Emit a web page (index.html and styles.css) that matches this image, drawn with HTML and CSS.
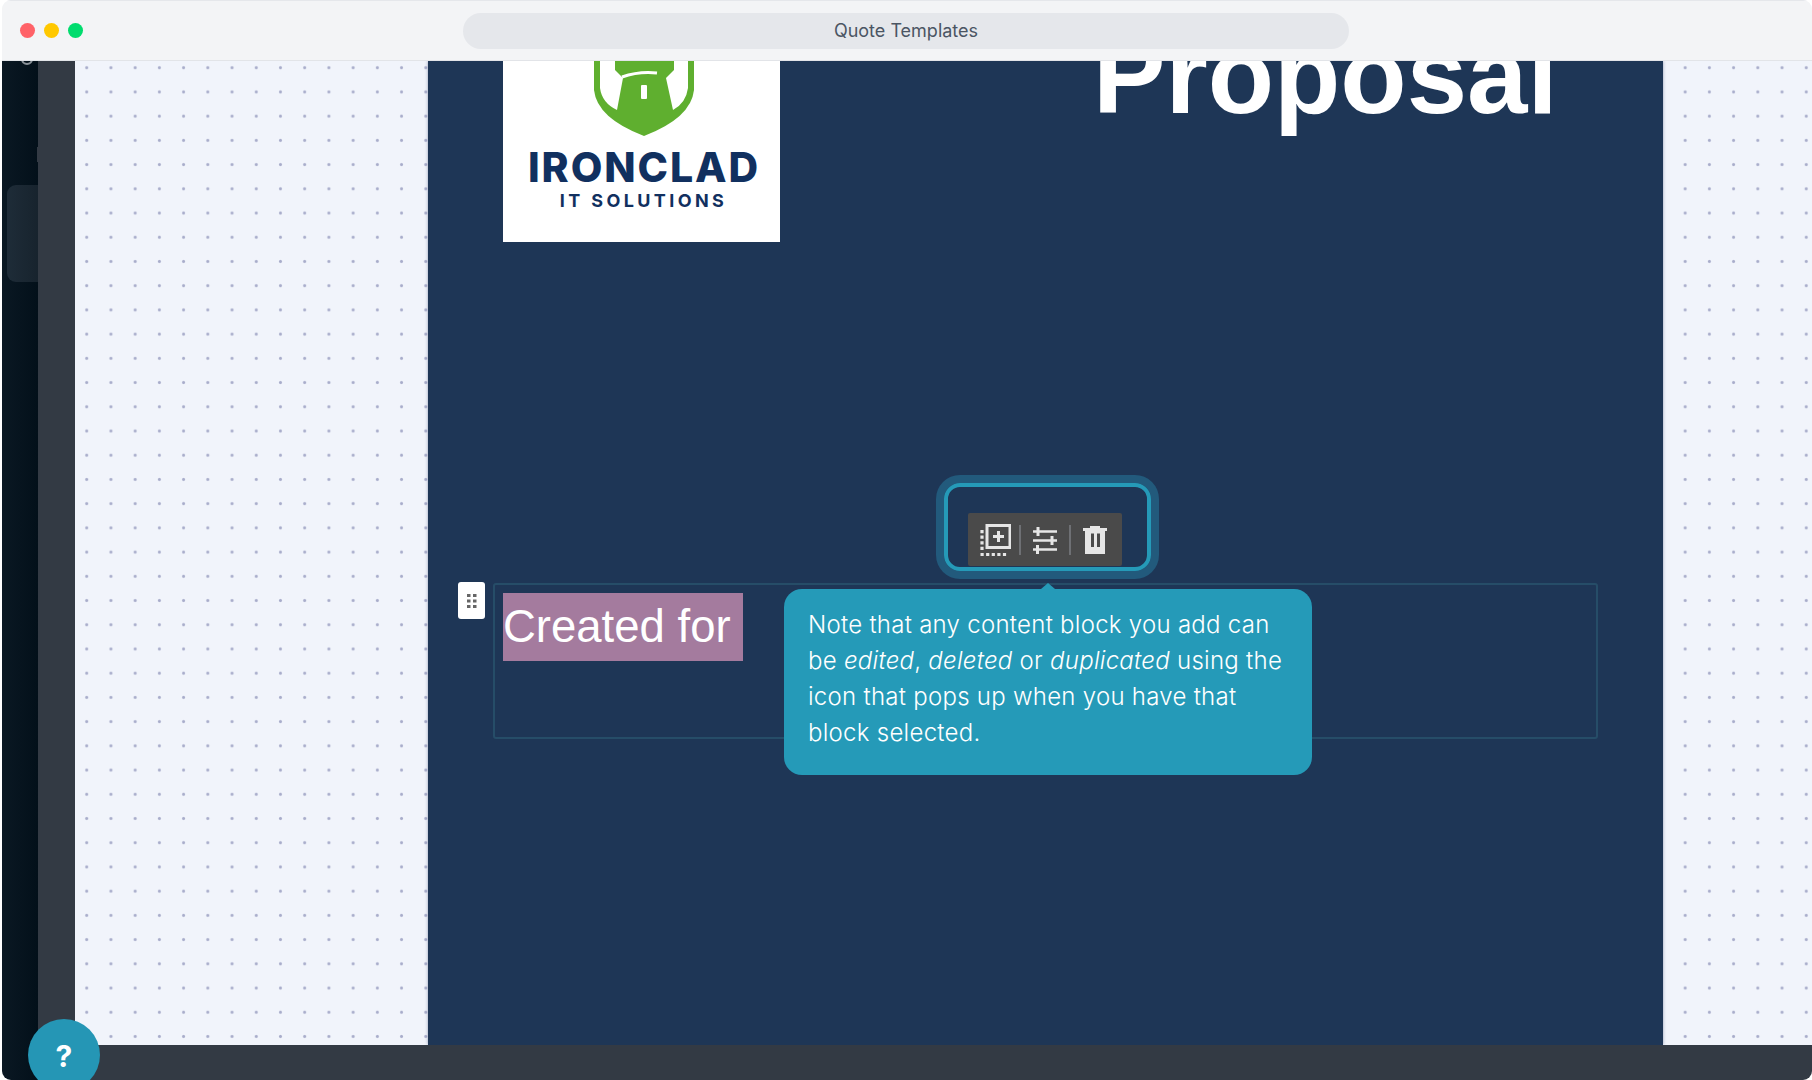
FILE: index.html
```html
<!DOCTYPE html>
<html lang="en">
<head>
  <meta charset="UTF-8">
  <title>Quote Templates</title>
  <link rel="stylesheet" href="styles.css">
</head>
<body>

  <div class="window">
    <div class="titlebar">
      <div class="lights">
        <span class="light red"></span>
        <span class="light yellow"></span>
        <span class="light green"></span>
      </div>
      <div class="address">Quote Templates</div>
    </div>

    <div class="app">
      <div class="sidebar">
        <span class="side-ring"></span>
        <span class="side-tick"></span>
        <div class="side-card"></div>
      </div>
      <div class="panel"></div>

      <div class="canvas">
        <div class="doc">
          <div class="doc-header">
            <div class="logo">
              <svg class="logo-mark" width="100" height="75" viewBox="593 61 100 75">
                <path d="M593 61V90Q596 118 643 136Q690 118 693 90V61Z" fill="#5faf2f"/>
                <path d="M599 61V88Q601 103 616 110L622 78L614 70V61ZM687 61V88Q685 103 672 110L665 78L673 70V61Z" fill="#fff"/>
                <path d="M621 77Q638 71 656 73" fill="none" stroke="#fff" stroke-width="3"/>
                <rect x="640" y="85" width="6" height="14" rx="1" fill="#fff"/>
              </svg>
              <div class="logo-name">IRONCLAD</div>
              <div class="logo-sub">IT SOLUTIONS</div>
            </div>
            <h1 class="doc-title">Proposal</h1>
          </div>

          <div class="block">
            <div class="handle">
              <svg width="10" height="14" viewBox="0 0 10 14">
                <g fill="#666">
                  <rect x="0" y="0" width="3.5" height="3"/><rect x="6" y="0" width="3.5" height="3"/>
                  <rect x="0" y="5.5" width="3.5" height="3"/><rect x="6" y="5.5" width="3.5" height="3"/>
                  <rect x="0" y="11" width="3.5" height="3"/><rect x="6" y="11" width="3.5" height="3"/>
                </g>
              </svg>
            </div>
            <span class="created">Created for</span>
          </div>

          <div class="spotlight">
            <div class="toolbar">
              <span class="tool tool-add">
                <svg width="31" height="32" viewBox="0 0 31 32">
                  <rect x="7" y="1.500" width="23" height="22" fill="none" stroke="#e6e6e6" stroke-width="3"/>
                  <path d="M18.500 7V18M13 12.500H24" stroke="#e6e6e6" stroke-width="3" fill="none"/>
                  <path d="M2 6V26" stroke="#e6e6e6" stroke-width="3.200" stroke-dasharray="3.200 2.400" fill="none"/>
                  <path d="M0.500 30.500H28" stroke="#e6e6e6" stroke-width="3.200" stroke-dasharray="3.200 2.400" fill="none"/>
                </svg>
              </span>
              <i class="sep"></i>
              <span class="tool tool-sliders">
                <svg width="24" height="28" viewBox="0 0 24 28">
                  <path d="M0 5.500H24M0 14.500H24M0 23.500H24" stroke="#e6e6e6" stroke-width="2.500" fill="none"/>
                  <path d="M5 1V10M19 10V19M4.500 19V28" stroke="#e6e6e6" stroke-width="3" fill="none"/>
                </svg>
              </span>
              <i class="sep"></i>
              <span class="tool tool-trash">
                <svg width="24" height="28" viewBox="0 0 24 28">
                  <path d="M7 0H17V2H24V5H0V2H7Z" fill="#e6e6e6"/>
                  <path d="M2 5H22V28H2ZM8 7.500V21H11V7.500ZM14 7.500V21H17V7.500Z" fill="#e6e6e6" fill-rule="evenodd"/>
                </svg>
              </span>
            </div>
          </div>

          <div class="tip">
            Note that any content block you add can be <em>edited</em>, <em>deleted</em> or <em>duplicated</em> using the icon that pops up when you have that block selected.
          </div>
        </div>
      </div>

      <div class="bottombar"></div>
    </div>

    <div class="help">?</div>
  </div>

</body>
</html>
```

FILE: styles.css
```css
html, body {
  margin: 0;
  padding: 0;
  background: #fff;
}

body {
  padding-left: 2px;
  font-family: 'Inter', sans-serif;
}

.window {
  position: relative;
  height: 1080px;
  border-radius: 9px;
  overflow: hidden;
  display: flex;
  flex-direction: column;
}

.titlebar {
  flex: none;
  height: 61px;
  box-sizing: border-box;
  border-top: 1px solid #e5e7eb;
  border-bottom: 1px solid #e2e4e8;
  background: #f3f4f6;
  display: flex;
  align-items: center;
  padding-left: 18px;
  padding-right: 463px;
}

.lights {
  display: flex;
  gap: 9px;
  width: 443px;
}

.light {
  width: 15px;
  height: 15px;
  border-radius: 50%;
}

.red { background: #ff6268; }
.yellow { background: #ffc800; }
.green { background: #00dc6e; }

.address {
  flex: 1;
  height: 36px;
  line-height: 36px;
  border-radius: 18px;
  background: #e5e7eb;
  color: #4b5563;
  font-size: 18px;
  text-align: center;
}

.app {
  flex: 1;
  min-height: 0;
  display: grid;
  grid-template-columns: 36px 37px 1fr;
  grid-template-rows: 1fr 35px;
}

.sidebar {
  grid-row: 1 / 3;
  position: relative;
  overflow: hidden;
  background: linear-gradient(90deg, #0a1823, #03101a);
}

.side-ring {
  position: absolute;
  left: 19px;
  top: -8px;
  width: 8px;
  height: 8px;
  border: 2px solid #8b9299;
  border-radius: 50%;
}

.side-tick {
  position: absolute;
  left: 35px;
  top: 86px;
  width: 2px;
  height: 15px;
  background: #333a44;
}

.side-card {
  position: absolute;
  left: 5px;
  top: 124px;
  width: 60px;
  height: 97px;
  border-radius: 9px;
  background: linear-gradient(90deg, #1e2c38, #111b24);
}

.panel {
  background: #333a44;
}

.canvas {
  padding-left: 353px;
  overflow: hidden;
  background-color: #f1f4fb;
  background-image: radial-gradient(circle, #a9adcb 1px, transparent 2px);
  background-size: 24.22px 24.22px;
  background-position: -0.4px -5.4px;
}

.doc {
  position: relative;
  width: 1235px;
  height: 100%;
  overflow: hidden;
  background: #1e3656;
  box-shadow: 0 0 3px rgba(60, 70, 120, 0.5);
}

.doc-header {
  display: flex;
  padding-left: 75px;
}

.logo {
  flex: none;
  width: 277px;
  height: 181px;
  background: #fff;
  display: flex;
  flex-direction: column;
  align-items: center;
  color: #11305f;
}

.logo-mark {
  display: block;
  flex: none;
  margin-left: 4px;
}

.logo-name {
  margin: 6px 0 0 5px;
  font-size: 41px;
  line-height: 50px;
  font-weight: 800;
  letter-spacing: 1.9px;
}

.logo-sub {
  margin: -3px 0 0 4px;
  font-size: 18px;
  line-height: 24px;
  font-weight: 700;
  letter-spacing: 3.4px;
}

.doc-title {
  margin: -48px 0 0 313px;
  font-family: 'Liberation Sans', sans-serif;
  font-size: 108.6px;
  line-height: 126px;
  font-weight: 700;
  color: #fff;
}

.block {
  position: relative;
  margin: 341px 0 0 65px;
  width: 1105px;
  height: 156px;
  box-sizing: border-box;
  padding: 8px;
  border: 2px solid #264d68;
  border-radius: 3px;
}

.handle {
  position: absolute;
  left: -37px;
  top: -3px;
  width: 27px;
  height: 37px;
  border-radius: 3px;
  background: #fff;
  display: flex;
  align-items: center;
  justify-content: center;
}

.created {
  display: inline-block;
  width: 240px;
  height: 68px;
  background: #a47b9e;
  color: #fff;
  font-family: 'Liberation Sans', sans-serif;
  font-size: 45.5px;
  line-height: 68px;
  white-space: nowrap;
}

.spotlight {
  position: absolute;
  left: 516px;
  top: 422px;
  width: 207px;
  height: 88px;
  box-sizing: border-box;
  border: 4px solid #259ab8;
  border-radius: 16px;
  box-shadow: 0 0 0 8px #225a7c;
  padding: 0 0 1px 20px;
  display: flex;
  align-items: flex-end;
}

.toolbar {
  width: 154px;
  height: 53px;
  background: #4a4a4a;
  border-radius: 2px;
  display: flex;
  align-items: center;
}

.tool {
  box-sizing: border-box;
  display: flex;
  align-items: center;
  justify-content: center;
}

.tool-add {
  width: 51px;
  padding-left: 3px;
}

.tool-sliders {
  width: 48px;
}

.tool-trash {
  width: 51px;
  padding-right: 4px;
}

.sep {
  flex: none;
  width: 2px;
  height: 30px;
  background: #6e7074;
}

.tip {
  position: absolute;
  left: 356px;
  top: 528px;
  width: 528px;
  height: 186px;
  box-sizing: border-box;
  padding: 18px 24px;
  border-radius: 18px;
  background: #259ab8;
  color: #fff;
  font-size: 24px;
  line-height: 36px;
  font-weight: 300;
  letter-spacing: 0.27px;
}

.tip::before {
  content: "";
  position: absolute;
  left: 257px;
  top: -6px;
  border-left: 7px solid transparent;
  border-right: 7px solid transparent;
  border-bottom: 6px solid #259ab8;
}

.bottombar {
  grid-column: 2 / 4;
  background: #333a44;
}

.help {
  position: absolute;
  left: 26px;
  top: 1019px;
  width: 72px;
  height: 72px;
  border-radius: 50%;
  background: #2596b5;
  color: #fff;
  font-size: 30px;
  font-weight: 700;
  line-height: 74px;
  text-align: center;
}
```
